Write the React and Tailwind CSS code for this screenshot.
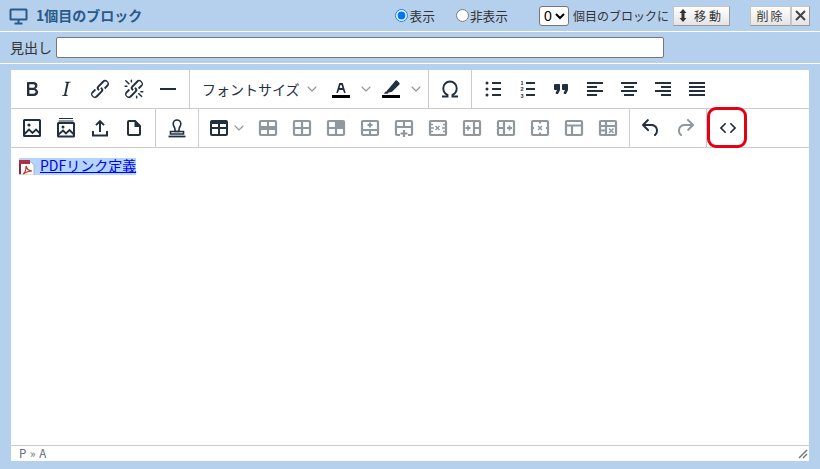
import { ChevronDown } from "lucide-react";

const DARK = "#222f3e";
const GRAY = "#8f979f";

// solid path icons on the editor's 24px grid
const paths = {
  bold: "M7.8 19c-.3 0-.5 0-.6-.2l-.2-.5V5.7c0-.2 0-.4.2-.5l.6-.2h5c1.5 0 2.7.3 3.5 1 .7.6 1.1 1.4 1.1 2.5a3 3 0 0 1-.6 1.9c-.4.6-1 1-1.6 1.2.4.1.9.3 1.3.6s.8.7 1 1.2c.4.4.5 1 .5 1.6 0 1.3-.4 2.3-1.3 3-.8.7-2.1 1-3.8 1H7.8zm5-8.3c.6 0 1.2-.1 1.6-.5.4-.3.6-.7.6-1.3 0-1.1-.8-1.7-2.3-1.7H9.3v3.5h3.4zm.5 6c.7 0 1.3-.1 1.7-.4.4-.4.6-.9.6-1.5s-.2-1-.7-1.4c-.4-.3-1-.4-2-.4H9.4v3.8h4z",
  italic: "M16.7 4.7l-.1.9h-.3c-.6 0-1 0-1.4.3-.3.3-.4.6-.5 1.1l-2.1 9.8v.6c0 .5.4.8 1.4.8h.2l-.2.8H8l.2-.8h.2c1.1 0 1.8-.5 2-1.5l2-9.8.1-.5c0-.6-.4-.8-1.4-.8h-.3l.2-.9h5.8z",
  link: "M6.2 12.3a1 1 0 0 1 1.4 1.4l-2.1 2a2 2 0 1 0 2.7 2.8l4.8-4.8a1 1 0 0 0 0-1.4 1 1 0 1 1 1.4-1.3 2.9 2.9 0 0 1 0 4L9.6 20a3.9 3.9 0 0 1-5.5-5.5l2-2zm11.6-.6a1 1 0 0 1-1.4-1.4l2-2a2 2 0 1 0-2.6-2.8L11 10.3a1 1 0 0 0 0 1.4A1 1 0 1 1 9.6 13a2.9 2.9 0 0 1 0-4L14.4 4a3.9 3.9 0 0 1 5.5 5.5l-2 2z",
  unlink: "M6.2 12.3a1 1 0 0 1 1.4 1.4l-2 2a2 2 0 1 0 2.6 2.8l4.8-4.8a1 1 0 0 0 0-1.4 1 1 0 1 1 1.4-1.3 2.9 2.9 0 0 1 0 4L9.6 20a3.9 3.9 0 0 1-5.5-5.5l2-2zm11.6-.6a1 1 0 0 1-1.4-1.4l2.1-2a2 2 0 1 0-2.7-2.8L11 10.3a1 1 0 0 0 0 1.4A1 1 0 1 1 9.6 13a2.9 2.9 0 0 1 0-4L14.4 4a3.9 3.9 0 0 1 5.5 5.5l-2 2zM7.6 6.3a.8.8 0 0 1-1 1.1L3.3 4.2a.7.7 0 1 1 1-1l3.2 3.1zM5.1 8.6a.8.8 0 0 1 0 1.5H3a.8.8 0 0 1 0-1.5H5zm5-3.5a.8.8 0 0 1-1.5 0V3a.8.8 0 0 1 1.5 0v2zm6 11.8a.8.8 0 0 1 1-1l3.2 3.2a.8.8 0 0 1-1 1L16 17zm-2.2 2a.8.8 0 0 1 1.5 0V21a.8.8 0 0 1-1.5 0V19zm5-3.5a.7.7 0 1 1 0-1.5H21a.8.8 0 0 1 0 1.5H19z",
  hr: "M4 11h16v2H4z",
  quote: "M7.5 17h.9c.4 0 .7-.2.9-.6L11 13V8c0-.6-.4-1-1-1H6a1 1 0 0 0-1 1v4c0 .6.4 1 1 1h2l-1.3 2.7a1 1 0 0 0 .8 1.3zm8 0h.9c.4 0 .7-.2.9-.6L19 13V8c0-.6-.4-1-1-1h-4a1 1 0 0 0-1 1v4c0 .6.4 1 1 1h2l-1.3 2.7a1 1 0 0 0 .8 1.3z",
  alignLeft: "M4 5h16v2H4zM4 9h10v2H4zM4 13h16v2H4zM4 17h10v2H4z",
  alignCenter: "M4 5h16v2H4zM7 9h10v2H7zM4 13h16v2H4zM7 17h10v2H7z",
  alignRight: "M4 5h16v2H4zM10 9h10v2H10zM4 13h16v2H4zM10 17h10v2H10z",
  justify: "M4 5h16v2H4zM4 9h16v2H4zM4 13h16v2H4zM4 17h16v2H4z",
  undo: "M6.4 8H12c3.7 0 6.2 2 6.8 5.1.6 2.7-.4 5.6-2.3 6.8a1 1 0 0 1-1-1.8c1.1-.7 1.8-2.7 1.4-4.6-.5-2.1-2.1-3.5-4.9-3.5H6.4l3.3 3.3a1 1 0 1 1-1.4 1.4l-5-5a1 1 0 0 1 0-1.4l5-5a1 1 0 0 1 1.4 1.4L6.4 8z",
  redo: "M17.6 10H12c-2.8 0-4.4 1.4-4.9 3.5-.4 2 .3 4 1.4 4.6a1 1 0 1 1-1 1.8c-2-1.2-2.9-4.1-2.3-6.8.6-3 3-5.1 6.8-5.1h5.6l-3.3-3.3a1 1 0 1 1 1.4-1.4l5 5a1 1 0 0 1 0 1.4l-5 5a1 1 0 0 1-1.4-1.4l3.3-3.3z",
  code: "M9.8 15.7c.3.3.3.8 0 1-.3.4-.9.4-1.2 0l-4.4-4.1a.8.8 0 0 1 0-1.2l4.4-4.2c.3-.3.9-.3 1.2 0 .3.3.3.8 0 1.1L6 12l3.8 3.7zm4.4 0L18 12l-3.8-3.7c-.3-.3-.3-.8 0-1.1.3-.3.9-.3 1.2 0l4.4 4.2c.3.3.3.9 0 1.2l-4.4 4.2c-.3.3-.9.3-1.2 0a.8.8 0 0 1 0-1.1z",
  tableMain: "M19 4a2 2 0 0 1 2 2v12a2 2 0 0 1-2 2H5a2 2 0 0 1-2-2V6c0-1.1.9-2 2-2h14zM5 13v5h6v-5H5zm14 0h-6v5h6v-5zm0-5h-6v3h6V8zM5 11h6V8H5v3z",
};

const Svg = ({ children, color = DARK }) => (
  <svg width="24" height="24" viewBox="0 0 24 24" fill={color} stroke="none" fillRule="evenodd">
    {children}
  </svg>
);

const Icon = ({ name, color }) => (
  <Svg color={color}>
    <path d={paths[name]} />
  </Svg>
);

const Btn = ({ children }) => (
  <div className="flex h-[38px] w-[34px] shrink-0 items-center justify-center">{children}</div>
);

const Chevron = () => (
  <ChevronDown className="h-[16px] w-[16px] text-[#8f979f]" strokeWidth={1.6} />
);

const Group = ({ children, last }) => (
  <div className={`flex h-[38px] items-center px-1 ${last ? "" : "border-r border-[#cccccc]"}`}>{children}</div>
);

// grey table icons: frame plus whatever is inside
const Frame = ({ children }) => (
  <svg width="24" height="24" viewBox="0 0 24 24" fill="none" stroke={GRAY} strokeWidth="2.2">
    <rect x="4" y="5" width="16" height="14" rx="1" />
    {children}
  </svg>
);

const tableIcons = [
  <Frame key="a">
    <path d="M4 12h16" strokeWidth="4" />
    <path d="M12 5v5M12 14v5" />
  </Frame>,
  <Frame key="b">
    <path d="M4 12h16M12 5v14" />
  </Frame>,
  <Frame key="c">
    <path d="M4 12h16M12 5v14" />
    <path d="M12 8.5h8" strokeWidth="7" />
  </Frame>,
  <Frame key="d">
    <path d="M4 14h16M12 14v5M12 6.5v5M9.5 9h5" />
  </Frame>,
  <Frame key="e">
    <path d="M4 11h16M12 5v6" />
    <path d="M8 19h8" stroke="#ffffff" strokeWidth="3" />
    <path d="M12 14v7M8.5 17.5h7" />
  </Frame>,
  <Frame key="f">
    <path d="M4 8.5h3M17 8.5h3M4 15.5h3M17 15.5h3" strokeWidth="1.6" />
    <path d="M9.5 10l4 4M13.5 10l-4 4" strokeWidth="1.5" />
    <path d="M16 12h3M5 12h3" strokeWidth="1.5" />
  </Frame>,
  <Frame key="g">
    <path d="M14 5v14M14 12h6" />
    <path d="M5.5 12h5M8 9.5v5" strokeWidth="1.8" />
  </Frame>,
  <Frame key="h">
    <path d="M10 5v14M4 12h6" />
    <path d="M13 12h5M15.5 9.5v5" strokeWidth="1.8" />
  </Frame>,
  <Frame key="i">
    <path d="M12 5v2.5M12 16.5V19" />
    <path d="M10 10l4 4M14 10l-4 4" strokeWidth="1.5" />
    <path d="M4 12h2M18 12h2" />
  </Frame>,
  <Frame key="j">
    <path d="M4 9.5h16M10 9.5v9.5" />
  </Frame>,
  <Frame key="k">
    <path d="M4 10h16M10 5v14M4 14.5h6" />
    <path d="M13 12.5l4.5 4.5M17.5 12.5l-4.5 4.5" strokeWidth="1.5" />
  </Frame>,
];

export default function App() {
  return (
    <div className="h-[469px] w-[820px] overflow-hidden bg-[#b5d0ec] font-['Noto_Sans_CJK_JP','Liberation_Sans',sans-serif] text-[#333333]">
      {/* block header */}
      <div className="flex h-[32px] items-center border-b border-white pl-[9px] pr-[10px]">
        <svg width="19" height="18" viewBox="0 0 19 18" fill="none" className="shrink-0">
          <rect x="1.5" y="2.5" width="16" height="10" rx="0.5" stroke="#2a5a8a" strokeWidth="2" />
          <path d="M9.5 13v3M5.5 16.5h8" stroke="#2a5a8a" strokeWidth="2" />
        </svg>
        <span className="ml-[8px] text-[14px] font-bold text-[#2a5a8a]">1個目のブロック</span>
        <label className="ml-auto flex items-center text-[12.7px]">
          <input type="radio" name="disp" defaultChecked className="m-0 h-[13px] w-[13px]" />
          <span className="ml-[2px]">表示</span>
        </label>
        <label className="ml-[21px] flex items-center text-[12.7px]">
          <input type="radio" name="disp" className="m-0 h-[13px] w-[13px]" />
          <span className="ml-[1px]">非表示</span>
        </label>
        <select
          defaultValue="0"
          className="ml-[31px] h-[20px] w-[30px] rounded-[3px] border border-[#767676] bg-white font-['Liberation_Sans'] text-[14px] text-black"
        >
          <option value="0">0</option>
        </select>
        <span className="ml-[4px] text-[12px]">個目のブロックに</span>
        <button className="ml-[4px] flex h-[20px] w-[57px] items-center justify-center border border-[#c4c4c4] border-b-[#9a9a9a] border-r-[#9a9a9a] bg-gradient-to-b from-white to-[#e4e4e4] text-[12px] tracking-[3px]">
          <svg width="8" height="13" viewBox="0 0 8 13" fill="#333333" className="mr-[7px]">
            <path d="M4 0l3.5 4H5.5v5h2L4 13 .5 9h2V4h-2z" />
          </svg>
          移動
        </button>
        <button className="ml-[20px] h-[20px] w-[41px] border border-[#c4c4c4] border-b-[#9a9a9a] bg-gradient-to-b from-white to-[#e4e4e4] text-[12px] tracking-[2px]">
          削除
        </button>
        <button className="flex h-[20px] w-[19px] items-center justify-center border border-[#c4c4c4] border-b-[#9a9a9a] border-r-[#9a9a9a] bg-gradient-to-b from-white to-[#e4e4e4]">
          <svg width="11" height="11" viewBox="0 0 11 11" stroke="#444444" strokeWidth="2">
            <path d="M1 1l9 9M10 1l-9 9" />
          </svg>
        </button>
      </div>

      {/* heading row */}
      <div className="flex h-[32px] items-center border-b border-white pl-[10px]">
        <span className="text-[14px]">見出し</span>
        <input
          type="text"
          className="ml-[4px] h-[21px] w-[608px] rounded-[2px] border border-[#767676] bg-white"
        />
      </div>

      {/* editor */}
      <div className="ml-[11px] mt-[6px] flex h-[391px] w-[798px] flex-col bg-white">
        <div className="flex h-[39px] border-b border-[#cccccc]">
          <Group>
            <Btn><Icon name="bold" /></Btn>
            <Btn><Icon name="italic" /></Btn>
            <Btn><Icon name="link" /></Btn>
            <Btn><Icon name="unlink" /></Btn>
            <Btn><Icon name="hr" /></Btn>
          </Group>
          <Group>
            <div className="flex w-[131px] items-center pl-[8px]">
              <span className="w-[97px] whitespace-nowrap text-[14px] text-[#222f3e]">フォントサイズ</span>
              <span className="ml-[5px]">
                <Chevron />
              </span>
            </div>
            <div className="flex h-[38px] w-[50px] items-center pl-[4px]">
              <Svg>
                <path d="M3 18h18v3H3z" fill="#000000" />
                <path d="M8.7 16h-.8a.5.5 0 0 1-.5-.6l2.7-9c.1-.3.3-.4.5-.4h2.8c.2 0 .4.1.5.4l2.7 9a.5.5 0 0 1-.5.6h-.8a.5.5 0 0 1-.4-.4l-.7-2.2c0-.2-.3-.4-.5-.4h-3.4c-.2 0-.4.2-.5.4l-.7 2.2c0 .3-.2.4-.4.4zm2.6-7.6l-.6 2a.5.5 0 0 0 .5.6h1.6a.5.5 0 0 0 .5-.6l-.6-2c0-.3-.3-.4-.5-.4h-.4c-.2 0-.4.1-.5.4z" />
              </Svg>
              <span className="ml-[5px]">
                <Chevron />
              </span>
            </div>
            <div className="flex h-[38px] w-[49px] items-center pl-[4px]">
              <Svg>
                <path d="M3 18h18v3H3z" fill="#000000" />
                <path d="M16.6 3.6a1 1 0 0 1 1.4 0l2.4 2.4a1 1 0 0 1 0 1.4L13 14.8 8.2 16l-1.4-.4 1.4-2.4 1-.9z" />
                <path d="M6.8 14.2l2.6 2.6H4.8z" />
              </Svg>
              <span className="ml-[5px]">
                <Chevron />
              </span>
            </div>
          </Group>
          <Group>
            <Btn>
              <svg width="24" height="24" viewBox="0 0 24 24" fill="none" stroke={DARK} strokeWidth="1.9">
                <path d="M4 19.5h5.5v-1.7C6.8 16.5 5.3 14 5.3 11.2a6.7 6.7 0 0 1 13.4 0c0 2.8-1.5 5.3-4.2 6.6v1.7H20" />
              </svg>
            </Btn>
          </Group>
          <Group last>
            <Btn>
              <Svg>
                <path d="M11 5h9v2h-9zM11 11h9v2h-9zM11 17h9v2h-9z" />
                <circle cx="6" cy="6" r="1.5" />
                <circle cx="6" cy="12" r="1.5" />
                <circle cx="6" cy="18" r="1.5" />
              </Svg>
            </Btn>
            <Btn>
              <Svg>
                <path d="M11 5h9v2h-9zM11 11h9v2h-9zM11 17h9v2h-9z" />
                <text x="5.5" y="7.5" fontSize="5.5" fontWeight="700" fontFamily="Liberation Sans">1</text>
                <text x="5.5" y="14" fontSize="5.5" fontWeight="700" fontFamily="Liberation Sans">2</text>
                <text x="5.5" y="20.5" fontSize="5.5" fontWeight="700" fontFamily="Liberation Sans">3</text>
              </Svg>
            </Btn>
            <Btn><Icon name="quote" /></Btn>
            <Btn><Icon name="alignLeft" /></Btn>
            <Btn><Icon name="alignCenter" /></Btn>
            <Btn><Icon name="alignRight" /></Btn>
            <Btn><Icon name="justify" /></Btn>
          </Group>
        </div>

        <div className="flex h-[39px] border-b border-[#cccccc]">
          <Group>
            <Btn>
              <svg width="24" height="24" viewBox="0 0 24 24" fill="none" stroke={DARK} strokeWidth="2">
                <rect x="4" y="4" width="16" height="16" rx="0.5" />
                <circle cx="9" cy="9" r="1.6" fill={DARK} stroke="none" />
                <path d="M4.5 18l4.5-4.5 3.5 3.5 3.5-3.5 4 4" strokeWidth="1.8" />
              </svg>
            </Btn>
            <Btn>
              <svg width="24" height="24" viewBox="0 0 24 24" fill="none" stroke={DARK} strokeWidth="2">
                <rect x="4" y="7" width="16" height="13.5" rx="0.5" />
                <path d="M5 2.5h14M4.5 5h15" strokeWidth="1" />
                <circle cx="9" cy="11" r="1.5" fill={DARK} stroke="none" />
                <path d="M4.5 18.5l4.5-4 3 3 3.5-3.5 4 4" strokeWidth="1.8" />
              </svg>
            </Btn>
            <Btn>
              <Svg>
                <path d="M11 7.5L8.7 9.8 7.3 8.4 12 3.7l4.7 4.7-1.4 1.4L13 7.5V16h-2zM4 15h2v3.5h12V15h2v5.5H4z" />
              </Svg>
            </Btn>
            <Btn>
              <Svg>
                <path d="M7 4h6.5L19 9.5V18a2 2 0 0 1-2 2H7a2 2 0 0 1-2-2V6a2 2 0 0 1 2-2zm0 2v12h10v-7h-4.5V6z" />
              </Svg>
            </Btn>
          </Group>
          <Group>
            <Btn>
              <svg width="24" height="24" viewBox="0 0 24 24" fill="none" stroke={DARK} strokeWidth="1.6">
                <path d="M10 13.5c0-2.5-1.8-3-1.8-5.7a3.8 3.8 0 0 1 7.600 0c0 2.700-1.800 3.200-1.800 5.700v2h-4z" />
                <path d="M5.5 15.5h13v2.5h-13z" />
                <path d="M3.5 20.5h17" strokeWidth="1.8" />
              </svg>
            </Btn>
          </Group>
          <Group>
            <div className="flex h-[38px] w-[48px] shrink-0 items-center pl-[4px]">
              <Svg>
                <path d={paths.tableMain} />
              </Svg>
              <Chevron />
            </div>
            {tableIcons.map((icon) => (
              <Btn key={icon.key}>{icon}</Btn>
            ))}
          </Group>
          <Group>
            <Btn><Icon name="undo" /></Btn>
            <Btn><Icon name="redo" color={GRAY} /></Btn>
          </Group>
          <div className="relative flex h-[38px] items-center px-1">
            <Btn><Icon name="code" /></Btn>
            {/* red annotation box */}
            <div className="absolute -top-[2px] left-0 h-[41px] w-[40px] rounded-[9px] border-[3px] border-[#e60012]" />
          </div>
        </div>

        {/* content */}
        <div className="min-h-0 flex-1 pl-[8px] pt-[10px]">
          <div className="flex h-[17px] w-fit items-center bg-[#b3d4fc]">
            <svg width="16" height="16" viewBox="0 0 16 16" className="shrink-0">
              <path d="M1 3h11l3 3v10H1z" fill="#ffffff" stroke="#b0a8a8" strokeWidth="0.8" />
              <path d="M0 1h11v4H0z" fill="#a83240" />
              <path d="M0 5h2v10H0z" fill="#8a2a36" />
              <path d="M4 15c2-1 3-5 3-8 1 3 3 5 6 5-3 0-6 1-9 3z" fill="none" stroke="#c0392b" strokeWidth="1.2" />
            </svg>
            <a href="#" className="ml-[5px] pb-[2px] text-[14px] leading-[17px] text-[#0000ee] underline">PDFリンク定義</a>
          </div>
        </div>

        {/* status bar */}
        <div className="flex h-[16px] items-center justify-between border-t border-[#cccccc] pl-[8px] text-[11.5px] tracking-[0.6px] text-[#5f6874]">
          <span>P » A</span>
          <svg width="10" height="10" viewBox="0 0 10 10" stroke="#6b7480" strokeWidth="1.4" className="mr-[1px]">
            <path d="M1 9l8-8M5 9l4-4" />
          </svg>
        </div>
      </div>
    </div>
  );
}
